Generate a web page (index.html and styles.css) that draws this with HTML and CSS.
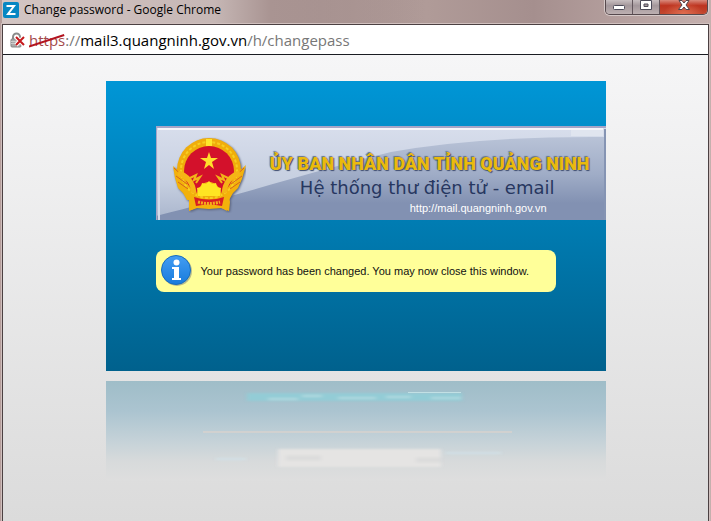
FILE: index.html
```html
<!DOCTYPE html>
<html lang="en">
<head>
<meta charset="utf-8">
<title>Change password</title>
<link rel="stylesheet" href="styles.css">
</head>
<body>
<div class="window">
  <header class="titlebar">
    <svg class="app-icon" viewBox="0 0 16 16" aria-hidden="true">
      <rect width="16" height="16" rx="2" fill="#0787c3"/>
      <path d="M3.500 4h7.500L5 12h7.500" fill="none" stroke="#fff" stroke-width="2"/>
    </svg>
    <h1 class="title">Change password - Google Chrome</h1>
    <div class="controls">
      <button class="control" type="button" aria-label="Minimize">
        <svg viewBox="0 0 12 12"><rect x=".5" y="5.500" width="11" height="4" rx="1" fill="#fff" stroke="#4c4b59"/></svg>
      </button>
      <button class="control" type="button" aria-label="Maximize">
        <svg viewBox="0 0 12 12"><path fill-rule="evenodd" d="M.5.5h11v9H.5zM4 4h4v2.500H4z" fill="#fff" stroke="#4c4b59"/></svg>
      </button>
      <button class="control close" type="button" aria-label="Close">
        <svg viewBox="0 0 12 12"><path d="M1 .5h3l2 2.500 2-2.500h3L8 5l3.500 4.500H8L6 7 4 9.500H.5L4 5z" fill="#fff" stroke="#52434c"/></svg>
      </button>
    </div>
  </header>
  <div class="frame">
    <div class="address">
      <svg class="lock" viewBox="0 0 16 16" aria-hidden="true">
        <path d="M3 8V5a3.500 3.500 0 0 1 7 0v3" fill="none" stroke="#8b8b8b" stroke-width="2"/>
        <rect x="1" y="7" width="10" height="8" rx="1" fill="#aaa" stroke="#858585"/>
        <path d="M1 9.500h9M1 11.500h9" stroke="#ccc"/>
        <path d="M6 5l8 8M14 5l-8 8" stroke="#fff" stroke-width="4"/>
        <path d="M6 5l8 8M14 5l-8 8" stroke="#c5191c" stroke-width="2"/>
      </svg>
      <span class="url"><span class="scheme">https<svg class="strike" viewBox="0 0 36 14" preserveAspectRatio="none" aria-hidden="true"><path d="M0 12.500L35 1" stroke="#b3141f" stroke-width="2"/></svg></span><span class="muted">://</span>mail3.quangninh.gov.vn<span class="muted">/h/changepass</span></span>
    </div>
    <main class="page">
      <section class="panel">
        <div class="banner">
          <svg class="sheen" viewBox="0 0 450 94" preserveAspectRatio="none" aria-hidden="true">
            <defs>
              <linearGradient id="light" x2="0" y2="1"><stop stop-color="#d8deec"/><stop offset=".6" stop-color="#c6cfe0"/><stop offset="1" stop-color="#a9b5cc"/></linearGradient>
              <linearGradient id="dark" gradientUnits="userSpaceOnUse" x1="0" y1="10" x2="0" y2="94"><stop stop-color="#b9c3d7"/><stop offset=".45" stop-color="#a0adc7"/><stop offset=".8" stop-color="#8291b2"/><stop offset="1" stop-color="#8291b2"/></linearGradient>
            </defs>
            <rect width="450" height="94" fill="url(#light)"/>
            <path d="M0 90C90 67 155 46 235 26Q325 10 450 11V94H0z" fill="url(#dark)"/>
            <path d="M0 94V1H450" fill="none" stroke="#a5a5c7" stroke-width="2"/>
            <path d="M3 94V3" stroke="#d2daea" stroke-width="2"/>
            <path d="M2 3H447" stroke="#f3f5fa" stroke-width="2"/>
            <path d="M415 4H447V10H415z" fill="#e0e5ef"/>
            <path d="M449 3V94" stroke="#8594b3" stroke-width="2"/>
          </svg>
          <svg class="emblem" viewBox="0 0 74 76" aria-hidden="true">
            <g class="emblem-shadow">
              <circle cx="37" cy="33" r="32" fill="#f0ad0b"/>
              <path d="M1 29l9 8 8 12 5 10-4 14 7-3 11 1 11-1 7 4-3-15 5-10 7-12 10-9-4 14-4 9-5 5-4 7H15l-4-7-5-5-3-10z" fill="#f3b10b"/>
              <path d="M17 59l6 2h28l6-2 1 6-1 9-8-3-12 1-12-1-8 3z" fill="#f3b10b"/>
            </g>
            <circle cx="37" cy="34" r="25" fill="#d3112b"/>
            <circle cx="37" cy="33" r="28" fill="none" stroke="#f7cf20" stroke-width="2" stroke-dasharray="3 2"/>
            <path d="M34 2h6v7h-6z" fill="#ffe82c"/>
            <path d="M37 15l2 6h7l-6 4 2 7-5-4-5 4 2-7-6-4h7z" fill="#ffe02c"/>
            <path d="M2 31l12 11M4 39l11 8M6 45l10 7M72 31L60 42M70 39l-11 8M68 45l-10 7" stroke="#d46420"/>
            <path d="M6 36q14 4 16 20M68 36q-14 4-16 20" fill="none" stroke="#f5b516" stroke-width="5"/>
            <path d="M18 41l6-3-2 5 6-3-4 6M56 41l-6-3 2 5-6-3 4 6" fill="none" stroke="#f2b418" stroke-width="2"/>
            <path d="M25 59a12 14 0 0 1 24 0z" fill="#f6b912"/>
            <path d="M26 59l-1-8 4-1 1-4 4 1 3-3 3 3 4-1 1 4 4 1-1 8z" fill="#ffe522"/>
            <path d="M22 60q15 5 30 0l-2 9q-13-3-26 0z" fill="#d81d23"/>
            <path d="M26 65q11 3 22 0" fill="none" stroke="#f5ad1d" stroke-width="3" stroke-dasharray="2 1"/>
          </svg>
          <div class="banner-text">
            <div class="authority">ỦY BAN NHÂN DÂN TỈNH QUẢNG NINH</div>
            <div class="system">Hệ thống thư điện tử - email</div>
            <div class="site">http://mail.quangninh.gov.vn</div>
          </div>
        </div>
        <div class="message" role="status">
          <svg class="info" viewBox="0 0 32 32" aria-hidden="true">
            <defs><linearGradient id="blue" x2="0" y2="1"><stop stop-color="#439df3"/><stop offset="1" stop-color="#187bdc"/></linearGradient></defs>
            <circle cx="16" cy="16" r="15" fill="#8a8f82" opacity=".6"/>
            <circle cx="15" cy="15" r="14.500" fill="url(#blue)" stroke="#176cbd"/>
            <circle cx="15.500" cy="7.500" r="3" fill="#fff"/>
            <path d="M11 12h7v11h2v2h-9v-2h2v-9h-2z" fill="#fff"/>
          </svg>
          <p>Your password has been changed. You may now close this window.</p>
        </div>
      </section>
      <div class="reflection" aria-hidden="true">
        <svg viewBox="0 0 500 100" preserveAspectRatio="none">
          <defs><filter id="soft" x="-10%" y="-100%" width="120%" height="300%" color-interpolation-filters="sRGB"><feGaussianBlur stdDeviation="2 1"/></filter></defs>
          <g filter="url(#soft)">
            <path d="M141 12H356V20H141z" fill="#93ccd6"/>
            <path d="M162 18h30M196 15h20M232 17h38M280 16h25M325 17h30" stroke="#b4dae0" stroke-width="2"/>
            <path d="M172 68H335V86H172z" fill="#e5e4e3"/>
            <path d="M180 77h35M310 79h25" stroke="#dcdcdc" stroke-width="5"/>
            <path d="M340 72h55M110 78h30" stroke="#d1e1e7" stroke-width="2"/>
          </g>
          <path d="M302 11.500H355" stroke="#c2e0e4"/>
          <path d="M97 51H406" stroke="#d1d1d0" stroke-width="2"/>
        </svg>
      </div>
    </main>
  </div>
</div>
</body>
</html>
```
FILE: styles.css
```css
* { box-sizing: border-box; }

body {
  margin: 0;
  font-family: "Liberation Sans", Arial, sans-serif;
}

.window {
  display: flex;
  flex-direction: column;
  min-height: 100vh;
  padding: 0 2px;
  background: linear-gradient(90deg, #b59d9b, #9f8a89 35%, #b09b98 60%, #a58f8e 75%, #c5b0ae);
}

.titlebar {
  display: flex;
  align-items: flex-start;
  height: 24px;
  padding: 0 0 0 1px;
  background: linear-gradient(90deg, #d3c5c3, #c6b7b5 30%, #a99492 38%, transparent 60%);
}

.app-icon {
  flex: none;
  width: 16px;
  height: 16px;
  margin-top: 2px;
}

.title {
  flex: 1;
  margin: 0 0 0 5px;
  font: 400 12px/20px "Open Sans", sans-serif;
  color: #000;
}

.controls {
  display: flex;
  margin-right: 1px;
  border: 1px solid #56494d;
  border-top: 0;
  border-radius: 0 0 5px 5px;
  box-shadow: 0 0 0 1px #d5c9c8;
  overflow: hidden;
}

.control {
  display: flex;
  justify-content: center;
  width: 27px;
  height: 14px;
  padding: 0;
  border: 0;
  border-right: 1px solid #62565c;
  background: linear-gradient(#c8bfc1, #a3979b 40%, #bdb0b1);
}

.control svg {
  width: 12px;
  height: 12px;
}

.control.close {
  width: 47px;
  border-right: 0;
  background: radial-gradient(ellipse at bottom, #e06d50, transparent 60%), linear-gradient(#d98a7c, #bd3420 40%, #c2482f);
}

.frame {
  flex: 1;
  display: flex;
  flex-direction: column;
  border: 1px solid #4b4042;
  box-shadow: 0 0 0 1px #d0c0be;
}

.address {
  display: flex;
  align-items: center;
  height: 30px;
  padding-left: 7px;
  border-bottom: 1px solid #1a1c22;
  background: #fff;
}

.lock {
  width: 16px;
  height: 16px;
  margin-right: 3px;
}

.url {
  font: 400 15px/24px "Open Sans", sans-serif;
  color: #000;
}

.muted { color: #777; }

.scheme {
  position: relative;
  color: #a34a4c;
}

.strike {
  position: absolute;
  left: 0;
  top: 4px;
  width: 100%;
  height: 14px;
}

.page {
  flex: 1;
  padding: 26px 16px 40px;
  background: linear-gradient(#f6f6f7, #dbdbdb);
}

.panel {
  max-width: 500px;
  margin: 0 auto;
  padding: 45px 0 79px 50px;
  background: linear-gradient(#0096d6, #00618d);
}

.banner {
  position: relative;
  display: flex;
  height: 94px;
}

.sheen {
  position: absolute;
  width: 100%;
  height: 100%;
}

.emblem {
  position: relative;
  flex: none;
  width: 74px;
  height: 76px;
  margin: 11px 0 0 16px;
}

.emblem-shadow { filter: drop-shadow(1px 1px 1px #59617b); }

.banner-text {
  position: relative;
  flex: 1;
  padding: 24px 16px 0 0;
  text-align: right;
  white-space: nowrap;
}

.authority {
  font: 900 18px/28px Roboto, "Liberation Sans", sans-serif;
  color: #eaba0d;
  text-shadow: 1px 1px 1px #3f4d70, -1px -1px 1px #67738c, 0 0 1px #5c6272;
}

.system {
  padding-right: 35px;
  font: 400 18px/20px "DejaVu Sans", sans-serif;
  color: #273760;
}

.site {
  padding-right: 43px;
  font-size: 11px;
  line-height: 20px;
  color: #fff;
}

.message {
  display: flex;
  align-items: center;
  max-width: 400px;
  height: 42px;
  margin-top: 30px;
  padding-left: 5px;
  border-radius: 8px;
  background: #ffff99;
}

.info {
  flex: none;
  width: 32px;
  height: 32px;
  margin-right: 8px;
}

.message p {
  margin: 0;
  font-size: 11px;
  line-height: 16px;
  color: #111;
}

.reflection {
  max-width: 500px;
  height: 100px;
  margin: 10px auto 0;
  background: linear-gradient(#9fbdc8, #abc4d0 30%, #c5d2d8 60%, #d7dadb 80%, #dedede);
}

.reflection svg {
  display: block;
  width: 100%;
  height: 100%;
}
```
